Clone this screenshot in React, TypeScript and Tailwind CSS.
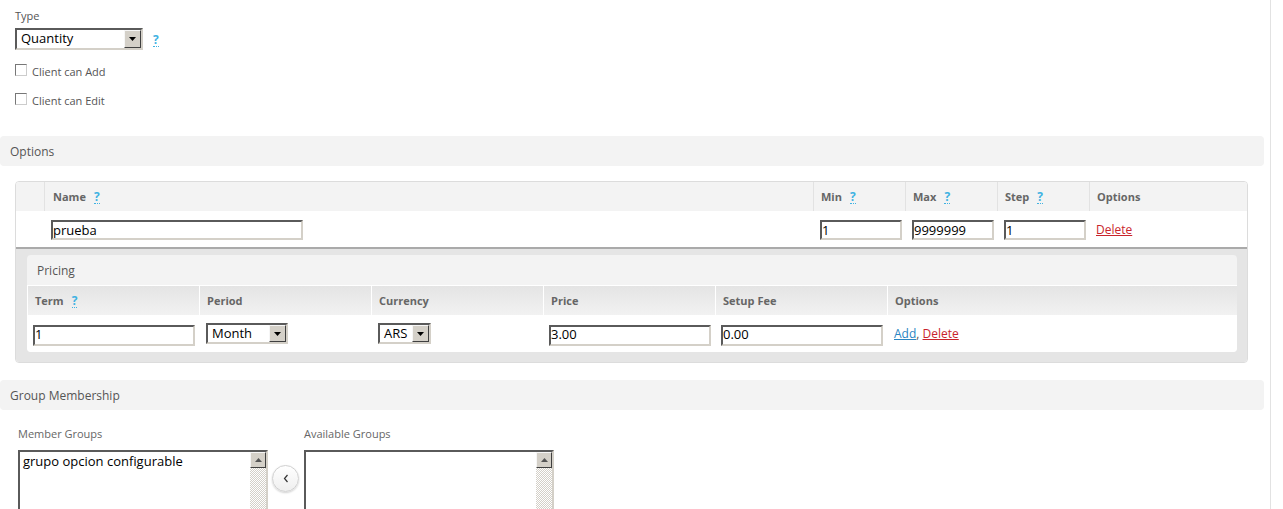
import React from "react";

const inset =
  "border-2 border-t-[#5a5a5a] border-l-[#5a5a5a] border-r-[#d4d0c8] border-b-[#d4d0c8] bg-white";

function Help({ className = "" }: { className?: string }) {
  return (
    <span
      className={`inline-block border-b border-dotted border-[#3fb2e2] pb-[1px] text-[12px] font-bold leading-[11px] text-[#3fb2e2] ${className}`}
    >
      ?
    </span>
  );
}

function TextInput({
  value,
  w,
  h = "h-[20px]",
  extra = "",
}: {
  value: string;
  w: string;
  h?: string;
  extra?: string;
}) {
  return (
    <input
      readOnly
      defaultValue={value}
      className={`${w} ${h} ${inset} px-0 text-[13px] leading-[16px] text-black outline-none ${extra}`}
    />
  );
}

function FakeSelect({ value, w, h }: { value: string; w: string; h: string }) {
  return (
    <div className={`flex ${w} ${h} ${inset}`}>
      <span className="flex flex-1 items-center pl-[4px] text-[13px] text-black">{value}</span>
      <span className="flex w-[17px] items-center justify-center border border-t-[#f6f6f6] border-l-[#f6f6f6] border-r-[#404040] border-b-[#404040] bg-[#d4d0c8]">
        <svg width="7" height="4" viewBox="0 0 7 4">
          <path d="M0 0h7L3.5 4z" fill="#000" />
        </svg>
      </span>
    </div>
  );
}

function Checkbox({ label, className = "" }: { label: string; className?: string }) {
  return (
    <div className={`flex items-start gap-[5px] ${className}`}>
      <span className="h-[12px] w-[12px] border border-t-[#777] border-l-[#777] border-r-[#ccc] border-b-[#ccc] bg-white" />
      <span className="text-[11px] leading-[15px] text-[#555]">{label}</span>
    </div>
  );
}

function SectionBar({ title, className = "" }: { title: string; className?: string }) {
  return (
    <div
      className={`flex h-[30px] items-center rounded-[4px] bg-[#f3f3f3] pl-[10px] pt-[1px] text-[12px] leading-[16px] text-[#555] ${className}`}
    >
      {title}
    </div>
  );
}

function ListBox({ items }: { items: string[] }) {
  return (
    <div className={`flex h-[90px] w-[250px] ${inset}`}>
      <div className="flex-1 pl-[3px] text-[13px] leading-[18px] text-black">
        {items.map((i) => (
          <div key={i}>{i}</div>
        ))}
      </div>
      <div className="flex w-[16px] flex-col">
        <span className="flex h-[16px] items-center justify-center border border-t-[#f6f6f6] border-l-[#f6f6f6] border-r-[#404040] border-b-[#404040] bg-[#d4d0c8]">
          <svg width="7" height="4" viewBox="0 0 7 4">
            <path d="M0 4h7L3.5 0z" fill="#555" />
          </svg>
        </span>
        <span className="flex-1 bg-[image:repeating-conic-gradient(#d4d0c8_0%_25%,#ffffff_0%_50%)] bg-[length:2px_2px]" />
      </div>
    </div>
  );
}

const headCell = "flex items-center pt-[1px] text-[11px] font-bold text-[#666]";

export default function App() {
  return (
    <div className="flex h-[509px] w-[1283px] overflow-hidden bg-white font-['Open_Sans',sans-serif]">
      <div className="w-[1271px] shrink-0 border-r border-[#e2e2e2]">
        <div className="w-[1264px]">
          {/* type */}
          <div className="pl-[15px] pt-[8px]">
            <div className="text-[11px] leading-[15px] text-[#555]">Type</div>
            <div className="mt-[5px] flex items-center">
              <FakeSelect value="Quantity" w="w-[128px]" h="h-[22px]" />
              <Help className="ml-[10px] mt-[2px]" />
            </div>
            <Checkbox label="Client can Add" className="mt-[14px]" />
            <Checkbox label="Client can Edit" className="mt-[14px]" />
          </div>

          <SectionBar title="Options" className="mt-[28px]" />

          {/* options table */}
          <div className="ml-[15px] mt-[15px] w-[1233px] overflow-hidden rounded-[4px] border border-[#dcdcdc]">
            <div className="grid h-[29px] grid-cols-[28px_769px_92px_92px_92px_158px] bg-[#f3f3f3]">
              <div />
              <div className={`${headCell} border-l border-[#e2e2e2] pl-[8px]`}>
                Name <Help className="ml-[8px]" />
              </div>
              <div className={`${headCell} border-l border-[#e2e2e2] pl-[7px]`}>
                Min <Help className="ml-[8px]" />
              </div>
              <div className={`${headCell} border-l border-[#e2e2e2] pl-[7px]`}>
                Max <Help className="ml-[8px]" />
              </div>
              <div className={`${headCell} border-l border-[#e2e2e2] pl-[7px]`}>
                Step <Help className="ml-[8px]" />
              </div>
              <div className={`${headCell} border-l border-[#e2e2e2] pl-[7px]`}>Options</div>
            </div>
            <div className="grid h-[38px] grid-cols-[28px_769px_92px_92px_92px_158px] items-center border-b-2 border-[#aaa] bg-white">
              <div />
              <div className="pl-[7px]">
                <TextInput value="prueba" w="w-[252px]" />
              </div>
              <div className="pl-[7px]">
                <TextInput value="1" w="w-[82px]" />
              </div>
              <div className="pl-[7px]">
                <TextInput value="9999999" w="w-[82px]" />
              </div>
              <div className="pl-[7px]">
                <TextInput value="1" w="w-[82px]" />
              </div>
              <div className="pl-[7px] pt-[1px] text-[12px]">
                <a className="text-[#c9242c] underline">Delete</a>
              </div>
            </div>

            {/* pricing */}
            <div className="bg-[#e5e5e5] pb-[10px] pl-[11px] pr-[10px] pt-[6px]">
              <div className="overflow-hidden rounded-[4px] bg-[#f3f3f3]">
                <div className="flex h-[30px] items-center pl-[10px] pt-[1px] text-[12px] text-[#555]">
                  Pricing
                </div>
                <div className="grid h-[30px] grid-cols-[172px_172px_172px_172px_172px_1fr] border-t border-white bg-linear-to-b from-[#e4e4e4] to-[#f2f2f2]">
                  <div className={`${headCell} border-l border-white pl-[7px]`}>
                    Term <Help className="ml-[8px]" />
                  </div>
                  <div className={`${headCell} border-l border-white pl-[7px]`}>Period</div>
                  <div className={`${headCell} border-l border-white pl-[7px]`}>Currency</div>
                  <div className={`${headCell} border-l border-white pl-[7px]`}>Price</div>
                  <div className={`${headCell} border-l border-white pl-[7px]`}>Setup Fee</div>
                  <div className={`${headCell} border-l border-white pl-[7px]`}>Options</div>
                </div>
                <div className="grid h-[37px] grid-cols-[172px_172px_172px_172px_172px_1fr] items-center bg-white">
                  <div className="pl-[6px]">
                    <TextInput value="1" w="w-[162px]" h="h-[21px]" extra="pb-[2px]" />
                  </div>
                  <div className="pl-[7px]">
                    <FakeSelect value="Month" w="w-[82px]" h="h-[21px]" />
                  </div>
                  <div className="pl-[7px]">
                    <FakeSelect value="ARS" w="w-[53px]" h="h-[21px]" />
                  </div>
                  <div className="pl-[6px]">
                    <TextInput value="3.00" w="w-[162px]" h="h-[21px]" extra="pb-[2px]" />
                  </div>
                  <div className="pl-[6px]">
                    <TextInput value="0.00" w="w-[162px]" h="h-[21px]" extra="pb-[2px]" />
                  </div>
                  <div className="pl-[7px] text-[12px] text-[#555]">
                    <a className="text-[#2a85c2] underline">Add</a>,{" "}
                    <a className="text-[#c9242c] underline">Delete</a>
                  </div>
                </div>
              </div>
            </div>
          </div>

          <SectionBar title="Group Membership" className="mt-[17px]" />

          {/* groups */}
          <div className="flex items-start pl-[18px] pt-[16px]">
            <div>
              <div className="text-[11px] leading-[15px] text-[#666]">Member Groups</div>
              <div className="mt-[9px]">
                <ListBox items={["grupo opcion configurable"]} />
              </div>
            </div>
            <button className="ml-[4px] mt-[39px] flex h-[27px] w-[27px] items-center justify-center rounded-full border border-[#d0d0d0] bg-linear-to-b from-white to-[#efefef] shadow-[0_1px_2px_rgba(0,0,0,0.18)]">
              <svg width="6" height="9" viewBox="0 0 6 9">
                <path d="M4.5 1L1.5 4.5L4.5 8" fill="none" stroke="#333" strokeWidth="1.2" />
              </svg>
            </button>
            <div className="ml-[5px]">
              <div className="text-[11px] leading-[15px] text-[#666]">Available Groups</div>
              <div className="mt-[9px]">
                <ListBox items={[]} />
              </div>
            </div>
          </div>
        </div>
      </div>
    </div>
  );
}
